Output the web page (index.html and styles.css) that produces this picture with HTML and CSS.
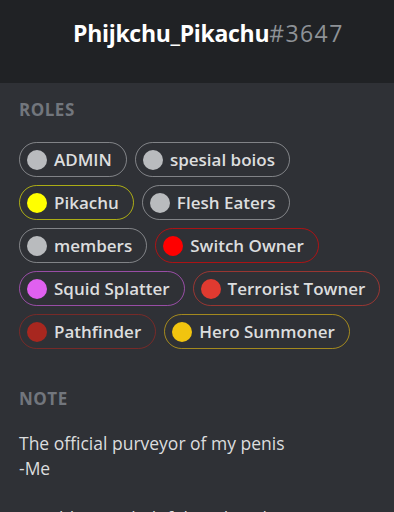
FILE: index.html
```html
<!DOCTYPE html>
<html>
<head>
<meta charset="utf-8">
<link rel="stylesheet" href="styles.css">
</head>
<body>
<div class="popout">
  <header class="header">
    <span class="username">Phijkchu_Pikachu</span><span class="discrim">#3647</span>
  </header>
  <main class="body">
    <section class="section">
      <h3 class="label">Roles</h3>
      <ul class="roles">
        <li class="role" style="--c:#b9bbbe"><span class="dot"></span>ADMIN</li>
        <li class="role" style="--c:#b9bbbe"><span class="dot"></span>spesial boios</li>
        <li class="role" style="--c:#ffff00"><span class="dot"></span>Pikachu</li>
        <li class="role" style="--c:#b9bbbe"><span class="dot"></span>Flesh Eaters</li>
        <li class="role" style="--c:#b9bbbe"><span class="dot"></span>members</li>
        <li class="role" style="--c:#ff0000"><span class="dot"></span>Switch Owner</li>
        <li class="role" style="--c:#e060f0"><span class="dot"></span>Squid Splatter</li>
        <li class="role" style="--c:#e03a30"><span class="dot"></span>Terrorist Towner</li>
        <li class="role" style="--c:#a8271f"><span class="dot"></span>Pathfinder</li>
        <li class="role" style="--c:#f1c40f"><span class="dot"></span>Hero Summoner</li>
      </ul>
    </section>
    <section class="section">
      <h3 class="label">Note</h3>
      <p class="note">The official purveyor of my penis<br>-Me<br><br>Worthless, unhelpful, and unclean</p>
    </section>
  </main>
</div>
</body>
</html>
```

FILE: styles.css
```css
html, body {
  margin: 0;
  padding: 0;
  background: #2f3136;
  height: 100%;
  overflow: hidden;
}
body {
  font-family: "Open Sans", "Noto Sans", sans-serif;
}
.popout {
  display: flex;
  flex-direction: column;
}
.header {
  background: #202225;
  height: 83px;
  box-sizing: border-box;
  padding: 16px 0 0 73px;
  font-size: 23px;
  line-height: 34px;
  white-space: nowrap;
}
.username {
  color: #ffffff;
  font-weight: 700;
  letter-spacing: -0.3px;
}
.discrim {
  color: #8e9297;
  font-weight: 400;
  letter-spacing: 1.4px;
}
.body {
  padding: 17px 4px 0 19px;
}
.section {
  margin-bottom: 40px;
}
.label {
  margin: 0 0 22px;
  color: #72767d;
  font-size: 17px;
  line-height: 20px;
  font-weight: 700;
  text-transform: uppercase;
  letter-spacing: 0.5px;
}
.roles {
  list-style: none;
  margin: 0;
  padding: 0;
  display: flex;
  flex-wrap: wrap;
  gap: 8px 8px;
}
.role {
  position: relative;
  display: flex;
  align-items: center;
  height: 35px;
  box-sizing: border-box;
  padding: 0 15px 0 8px;
  border-radius: 18px;
  color: #dcddde;
  font-size: 17px;
  font-weight: 600;
  white-space: nowrap;
}
.role::before {
  content: "";
  position: absolute;
  inset: 0;
  border: 1.5px solid var(--c);
  border-radius: 18px;
  opacity: 0.6;
}
.dot {
  width: 20px;
  height: 20px;
  border-radius: 50%;
  background: var(--c);
  margin-right: 7px;
  flex: none;
}
.note {
  margin: 0;
  color: #dcddde;
  font-size: 17.5px;
  line-height: 25px;
}
```
